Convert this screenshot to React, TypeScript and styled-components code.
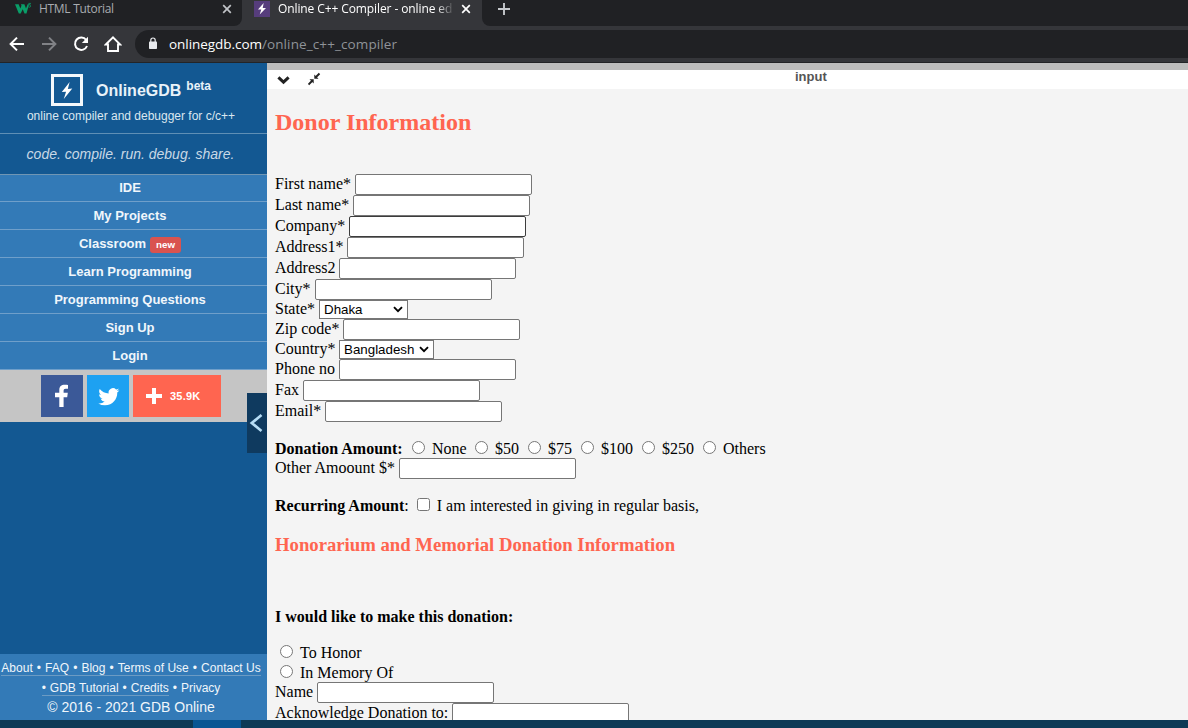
import React from "react";
import styled, { createGlobalStyle } from "styled-components";

const GlobalStyle = createGlobalStyle`
  * { box-sizing: border-box; }
  html, body { margin: 0; padding: 0; overflow: hidden; }
`;

const sans = '"Liberation Sans", Arial, sans-serif';
const serif = '"Liberation Serif", "Times New Roman", serif';
const chromeFont = '"Open Sans", "Noto Sans", sans-serif';

const Window = styled.div`
  width: 1188px;
  height: 728px;
  display: flex;
  flex-direction: column;
  overflow: hidden;
  background: #f4f4f4;
`;

/* ---------- browser chrome ---------- */

const TabStrip = styled.div`
  height: 26px;
  flex: none;
  display: flex;
  background: #35363a;
  font-family: ${chromeFont};
  font-size: 12px;
`;

const Tab = styled.div<{ $active?: boolean; $w: number }>`
  width: ${(p) => p.$w}px;
  height: 26px;
  flex: none;
  display: flex;
  align-items: flex-start;
  padding: 0 ${(p) => (p.$active ? 11 : 10)}px 0 ${(p) => (p.$active ? 12 : 15)}px;
  background: ${(p) => (p.$active ? "#35363a" : "#202124")};
  border-bottom-right-radius: ${(p) => (p.$active ? 0 : 8)}px;
  color: ${(p) => (p.$active ? "#fff" : "#a9acb0")};
  svg { flex: none; }
`;

const TabTitle = styled.span<{ $gap: number; $fade?: boolean; $ls: number }>`
  flex: 1;
  min-width: 0;
  margin-left: ${(p) => p.$gap}px;
  line-height: 18px;
  letter-spacing: ${(p) => p.$ls}px;
  white-space: nowrap;
  overflow: hidden;
  ${(p) => p.$fade && "mask-image: linear-gradient(to right, #000 158px, transparent 177px);"}
`;

const TabRest = styled.div`
  flex: 1;
  padding-left: 16px;
  background: #202124;
  border-bottom-left-radius: 8px;
`;

const Toolbar = styled.div`
  height: 37px;
  flex: none;
  display: flex;
  align-items: center;
  padding: 0 0 1px 8px;
  background: #35363a;
  border-bottom: 1px solid #232427;
`;

const NavIcons = styled.div`
  display: flex;
  gap: 14px;
  width: 127px;
`;

const AddressBar = styled.div`
  flex: 1;
  height: 28px;
  display: flex;
  align-items: center;
  padding-left: 13px;
  background: #202124;
  border-radius: 14px 0 0 14px;
  font-family: ${chromeFont};
  font-size: 13.5px;
  color: #8f9398;
  white-space: pre;
`;

const Url = styled.span`
  margin-left: 11px;
  line-height: 26px;
`;
const Host = styled.span`
  color: #fff;
  letter-spacing: -0.05px;
`;
const Path = styled.span`
  letter-spacing: 0.11px;
`;

/* ---------- sidebar ---------- */

const Body = styled.div`
  height: 657px;
  flex: none;
  display: flex;
`;

const Sidebar = styled.aside`
  position: relative;
  width: 267px;
  flex: none;
  display: flex;
  flex-direction: column;
  background: #135892;
  font-family: ${sans};
  color: #fff;
`;

const Brand = styled.div`
  height: 71px;
  padding-top: 11px;
  border-bottom: 1px solid #5f8fb5;
`;

const BrandRow = styled.div`
  display: flex;
  height: 32px;
  padding-left: 51px;
`;

const Logo = styled.div`
  width: 32px;
  height: 32px;
  display: flex;
  align-items: center;
  justify-content: center;
  border: 3px solid #f4f8fb;
`;

const BrandName = styled.div`
  margin-left: 13px;
  font-size: 16px;
  font-weight: bold;
  line-height: 33px;
  color: #e9f2f9;
`;

const Beta = styled.div`
  margin-left: 5px;
  font-size: 12px;
  font-weight: bold;
  line-height: 24px;
  color: #e9f2f9;
`;

const Tagline = styled.div`
  width: 262px;
  text-align: center;
  font-size: 12px;
  line-height: 20px;
  color: #dbe7f0;
`;

const Slogan = styled.div`
  height: 41px;
  padding-right: 6px;
  text-align: center;
  font-size: 14px;
  font-style: italic;
  line-height: 40px;
  color: #c9d9e6;
  border-bottom: 1px solid #7096b4;
`;

const NavItem = styled.div<{ $h?: number }>`
  height: ${(p) => p.$h ?? 28}px;
  display: flex;
  justify-content: center;
  align-items: center;
  padding: 0 7px ${(p) => (p.$h === 27 ? 1 : 0)}px 0;
  background: #337ab7;
  border-bottom: 1px solid #6f9fca;
  font-size: 13px;
  font-weight: bold;
  color: #f0f6fb;
`;

const NewBadge = styled.span`
  height: 16px;
  margin: 3px 0 0 4px;
  padding: 0 6px;
  border-radius: 3px;
  background: #d9534f;
  color: #fff;
  font-size: 9.75px;
  line-height: 16px;
`;

const Social = styled.div`
  height: 52px;
  display: flex;
  gap: 4px;
  padding: 5px 0 0 41px;
  background: #c5c5c5;
`;

const SocialButton = styled.div<{ $bg: string; $w?: number }>`
  width: ${(p) => p.$w ?? 42}px;
  height: 42px;
  background: ${(p) => p.$bg};
  display: flex;
  align-items: center;
  font-size: 11px;
  font-weight: bold;
`;

const Count = styled.span`
  margin-left: 8px;
  letter-spacing: 0.2px;
`;

const Collapse = styled.div`
  position: absolute;
  top: 330px;
  right: 0;
  width: 20px;
  height: 60px;
  display: flex;
  align-items: center;
  background: #0f3a5f;
`;

const Footer = styled.div`
  margin-top: auto;
  height: 66px;
  padding: 4px 5px 0 0;
  background: #337ab7;
  text-align: center;
  display: flex;
  flex-direction: column;
  align-items: center;
  color: #f0f6fb;
`;

const FooterLinks = styled.div<{ $ls: number }>`
  display: flex;
  height: 20px;
  gap: 4px;
  font-size: 12px;
  line-height: 20px;
  letter-spacing: ${(p) => p.$ls}px;
  white-space: pre;
`;

const Underlined = styled.div`
  display: flex;
  gap: 4px;
  height: 18px;
  border-bottom: 1px solid #6c9bc3;
`;

const Copyright = styled.div`
  font-size: 14px;
  line-height: 18px;
`;

/* ---------- main ---------- */

const Main = styled.main`
  flex: 1;
  min-width: 0;
  overflow: hidden;
  background: #f4f4f4;
  color: #000;
  font-family: ${serif};
  font-size: 16px;
`;

const PaneBar = styled.div`
  height: 26px;
  display: flex;
  padding-left: 10px;
  background: #fff;
  border-top: 7px solid #bdbdbd;
`;

const PaneIcons = styled.div`
  width: 518px;
  display: flex;
  align-items: flex-start;
  gap: 18px;
`;

const PaneTitle = styled.div`
  font-family: ${sans};
  font-weight: bold;
  font-size: 13px;
  line-height: 14px;
  color: #555;
`;

const Form = styled.form`
  padding-left: 8px;
  white-space: pre;
`;

const Heading = styled.h2`
  margin: 19px 0 38px;
  height: 28px;
  font-size: 24px;
  line-height: 28px;
  color: #ff6550;
`;

const SubHeading = styled.h3`
  margin: 18px 0 52px;
  height: 22px;
  font-size: 18.72px;
  line-height: 22px;
  color: #ff6550;
`;

const Question = styled.h4`
  margin: 0 0 16px;
  height: 19px;
  font-size: 16px;
  line-height: 18px;
`;

const Row = styled.div<{ $h?: number }>`
  display: flex;
  height: ${(p) => p.$h ?? 21}px;
`;

const Label = styled.label<{ $w: number; $select?: boolean }>`
  width: ${(p) => p.$w}px;
  flex: none;
  line-height: ${(p) => (p.$select ? 18 : 20)}px;
`;

const TextInput = styled.input<{ $dark?: boolean }>`
  width: 177px;
  height: 21px;
  margin: 0;
  padding: 1px 2px;
  border: 1px solid ${(p) => (p.$dark ? "#3c3c3c" : "#767676")};
  border-radius: 2px;
  background: #fff;
`;

const SelectBox = styled.div<{ $w: number }>`
  width: ${(p) => p.$w}px;
  height: 19px;
  display: flex;
  justify-content: space-between;
  align-items: center;
  padding: 0 4px;
  border: 1px solid #767676;
  background: #fff;
  font-family: ${sans};
  font-size: 13.33px;
  line-height: 17px;
`;

const Options = styled.div`
  display: flex;
  height: 19px;
  margin-top: 17px;
  line-height: 19px;
`;

const Bold = styled.b<{ $w: number }>`
  width: ${(p) => p.$w}px;
`;

const Option = styled.label<{ $w: number }>`
  width: ${(p) => p.$w}px;
  display: flex;
  white-space: pre;
`;

const Control = styled.input`
  width: 13px;
  height: 13px;
  margin: 2px 7px 0 0;
  flex: none;
`;

const Recurring = styled.div`
  display: flex;
  height: 20px;
  gap: 8px;
  margin-top: 17px;
  line-height: 20px;
`;

const Stacked = styled.div<{ $h: number }>`
  display: flex;
  height: ${(p) => p.$h}px;
  padding-left: 5px;
  line-height: 20px;
`;

const Taskbar = styled.div`
  height: 8px;
  flex: none;
  padding-left: 193px;
  background: #0d3a56;
`;
const TaskActive = styled.div`
  width: 48px;
  height: 8px;
  background: #085693;
`;

const Bolt = ({ w, h }: { w: number; h: number }) => (
  <svg width={w} height={h} viewBox="0 0 12 18">
    <path d="M8.800 0 0.500 10.600 5 10.200 2.600 18 11.600 6.800 6.900 7.300Z" fill="#fff" />
  </svg>
);

const CloseIcon = ({ color }: { color: string }) => (
  <svg width="10" height="18" viewBox="0 0 10 18">
    <path d="M1.2 5.2l7.6 7.6M8.800 5.2l-7.6 7.6" stroke={color} strokeWidth="1.7" fill="none" />
  </svg>
);

const SelectArrow = () => (
  <svg width="10" height="7" viewBox="0 0 10 7">
    <path d="M1 1.2l4 4 4-4" stroke="#000" strokeWidth="1.9" fill="none" />
  </svg>
);

type Field = { label: string; w: number; select?: string; selectW?: number; dark?: boolean };

const fields: Field[] = [
  { label: "First name*", w: 80 },
  { label: "Last name*", w: 78 },
  { label: "Company*", w: 74, dark: true },
  { label: "Address1*", w: 72 },
  { label: "Address2", w: 64 },
  { label: "City*", w: 40 },
  { label: "State*", w: 44, select: "Dhaka", selectW: 89 },
  { label: "Zip code*", w: 68 },
  { label: "Country*", w: 64, select: "Bangladesh", selectW: 95 },
  { label: "Phone no", w: 64 },
  { label: "Fax", w: 28 },
  { label: "Email*", w: 50 },
];

const amounts = [
  { label: "None", w: 63 },
  { label: "$50", w: 53 },
  { label: "$75", w: 53 },
  { label: "$100", w: 61 },
  { label: "$250", w: 61 },
  { label: "Others", w: 70 },
];

const navItems = ["IDE", "My Projects", "Classroom", "Learn Programming", "Programming Questions", "Sign Up", "Login"];

export default function App() {
  return (
    <Window>
      <GlobalStyle />
      <TabStrip>
        <Tab $w={242}>
          <svg width="17" height="16" viewBox="0 0 17 16">
            <path d="M0 4.300h3.700l1.600 4.200 1.200-2.800-.6-1.400h3.500l1.600 4.200 1.600-4.200h1.500L11.500 13.500H9.500L7.700 9.200 5.700 13.500H3.800Z" fill="#0a9d68" />
            <path d="M13.400 3.400h2.200L14.400 5c1.600 0 1.600 2.200 0 2.200l-1.100-.4" stroke="#0a9d68" strokeWidth="0.8" fill="none" />
          </svg>
          <TabTitle $gap={7} $ls={-0.3}>HTML Tutorial</TabTitle>
          <CloseIcon color="#c0c3c7" />
        </Tab>
        <Tab $w={240} $active>
          <svg width="16" height="17" viewBox="0 0 16 17">
            <rect y="1" width="16" height="16" fill="#563d7c" />
            <path d="M9.700 3 4 9.400h3.300L5.700 14.500 12 8H8.700Z" fill="#fff" />
          </svg>
          <TabTitle $gap={8} $ls={-0.1} $fade>Online C++ Compiler - online ed</TabTitle>
          <CloseIcon color="#fff" />
        </Tab>
        <TabRest>
          <svg width="12" height="18" viewBox="0 0 12 18">
            <path d="M6 3v12M0 9h12" stroke="#c5c8cc" strokeWidth="1.9" fill="none" />
          </svg>
        </TabRest>
      </TabStrip>
      <Toolbar>
        <NavIcons>
          <svg width="18" height="18" viewBox="0 0 18 18">
            <path d="M16 9H3M9 2.600 2.600 9 9 15.400" stroke="#fff" strokeWidth="2" fill="none" />
          </svg>
          <svg width="18" height="18" viewBox="0 0 18 18">
            <path d="M2 9h13M9 2.600 15.400 9 9 15.400" stroke="#818286" strokeWidth="2" fill="none" />
          </svg>
          <svg width="18" height="18" viewBox="0 0 18 18">
            <path d="M14.200 5A6.200 6.200 0 1 0 15 11" stroke="#fff" strokeWidth="2" fill="none" />
            <path d="M16 1.800V8H9.800Z" fill="#fff" />
          </svg>
          <svg width="18" height="18" viewBox="0 0 18 18">
            <path d="M1.800 9.500 9 2.300l7.200 7.200H14V16H4V9.500Z" stroke="#fff" strokeWidth="1.900" fill="none" />
          </svg>
        </NavIcons>
        <AddressBar>
          <svg width="10" height="13" viewBox="0 0 10 13">
            <rect x="1" y="4.500" width="8" height="7.500" rx="0.800" fill="#e8eaed" />
            <path d="M2.800 5V3.200a2.200 2.200 0 0 1 4.400 0V5" stroke="#e8eaed" strokeWidth="1.200" fill="none" />
          </svg>
          <Url>
            <Host>onlinegdb.com</Host>
            <Path>/online_c++_compiler</Path>
          </Url>
        </AddressBar>
      </Toolbar>
      <Body>
        <Sidebar>
          <Brand>
            <BrandRow>
              <Logo><Bolt w={12} h={17} /></Logo>
              <BrandName>OnlineGDB</BrandName>
              <Beta>beta</Beta>
            </BrandRow>
            <Tagline>online compiler and debugger for c/c++</Tagline>
          </Brand>
          <Slogan>code. compile. run. debug. share.</Slogan>
          {navItems.map((item, i) => (
            <NavItem key={item} $h={i === 0 ? 27 : 28}>
              {item}
              {item === "Classroom" && <NewBadge>new</NewBadge>}
            </NavItem>
          ))}
          <Social>
            <SocialButton $bg="#3b5998">
              <svg width="42" height="42" viewBox="0 0 42 42">
                <path d="M18.300 32V22.300H14v-4.500h4.300v-2.600c0-3.700 2-5.400 5.400-5.400 1.400 0 2.500.1 3.300.2v3.800h-2.200c-1.700 0-2.200.8-2.200 2v2h4.200l-.6 4.500h-3.600V32Z" fill="#fff" />
              </svg>
            </SocialButton>
            <SocialButton $bg="#1da1f2">
              <svg width="42" height="42" viewBox="0 0 42 42">
                <path transform="translate(11.300 11.200) scale(0.880)" d="M23.950 4.570a10 10 0 0 1-2.820.77 4.960 4.960 0 0 0 2.160-2.720c-.95.55-2 .95-3.120 1.190a4.920 4.920 0 0 0-8.380 4.480C7.690 8.090 4.070 6.130 1.640 3.160a4.820 4.820 0 0 0-.67 2.470c0 1.710.87 3.210 2.190 4.100a4.900 4.900 0 0 1-2.230-.62v.06a4.920 4.920 0 0 0 3.950 4.830 5 5 0 0 1-2.210.08 4.940 4.940 0 0 0 4.600 3.420A9.870 9.870 0 0 1 0 19.540a14 14 0 0 0 7.550 2.210c9.050 0 14-7.500 14-13.980 0-.21 0-.42-.02-.63a9.940 9.940 0 0 0 2.460-2.550Z" fill="#fff" />
              </svg>
            </SocialButton>
            <SocialButton $bg="#ff6550" $w={88}>
              <svg width="29" height="42" viewBox="0 0 29 42">
                <path d="M21 13v16M13 21h16" stroke="#fff" strokeWidth="4" />
              </svg>
              <Count>35.9K</Count>
            </SocialButton>
          </Social>
          <Collapse>
            <svg width="20" height="20" viewBox="0 0 20 20">
              <path d="M14.500 2 4.800 10 14.500 18" stroke="#b5dcf5" strokeWidth="2.700" fill="none" />
            </svg>
          </Collapse>
          <Footer>
            <FooterLinks $ls={0.03}>
              <Underlined>
                <span>About</span><span>•</span><span>FAQ</span><span>•</span><span>Blog</span><span>•</span>
                <span>Terms of Use</span><span>•</span><span>Contact Us</span>
              </Underlined>
            </FooterLinks>
            <FooterLinks $ls={0}>
              <Underlined>
                <span>•</span><span>GDB Tutorial</span><span>•</span><span>Credits</span>
              </Underlined>
              <span>•</span><span>Privacy</span>
            </FooterLinks>
            <Copyright>© 2016 - 2021 GDB Online</Copyright>
          </Footer>
        </Sidebar>
        <Main>
          <PaneBar>
            <PaneIcons>
              <svg width="13" height="19" viewBox="0 0 13 19">
                <path d="M1.400 7.300l5.100 4.800 5.100-4.800" stroke="#222" strokeWidth="3" fill="none" />
              </svg>
              <svg width="13" height="19" viewBox="0 0 13 19">
                <path d="M11.500 3.500 8 7M0.500 14.500 4 11" stroke="#222" strokeWidth="1.900" />
                <path d="M6.300 4.500v4.200h4.200ZM5.700 13.500V9.300H1.500Z" fill="#222" />
              </svg>
            </PaneIcons>
            <PaneTitle>input</PaneTitle>
          </PaneBar>
          <Form>
            <Heading>Donor Information</Heading>
            {fields.map((f) => (
              <Row key={f.label} $h={f.select ? 19 : 21}>
                <Label $w={f.w} $select={!!f.select}>{f.label}</Label>
                {f.select ? (
                  <SelectBox $w={f.selectW!}>
                    {f.select}
                    <SelectArrow />
                  </SelectBox>
                ) : (
                  <TextInput $dark={f.dark} />
                )}
              </Row>
            ))}
            <Options>
              <Bold $w={137}>Donation Amount:</Bold>
              {amounts.map((a) => (
                <Option key={a.label} $w={a.w}>
                  <Control type="radio" name="amount" />
                  {a.label}
                </Option>
              ))}
            </Options>
            <Row>
              <Label $w={124}>Other Amoount $*</Label>
              <TextInput />
            </Row>
            <Recurring>
              <span><b>Recurring Amount</b>:</span>
              <Option $w={300}>
                <Control type="checkbox" />
                I am interested in giving in regular basis,
              </Option>
            </Recurring>
            <SubHeading>Honorarium and Memorial Donation Information</SubHeading>
            <Question>I would like to make this donation:</Question>
            <Stacked $h={20}><Control type="radio" name="kind" />To Honor</Stacked>
            <Stacked $h={19}><Control type="radio" name="kind" />In Memory Of</Stacked>
            <Row>
              <Label $w={42}>Name</Label>
              <TextInput />
            </Row>
            <Row>
              <Label $w={177}>Acknowledge Donation to:</Label>
              <TextInput />
            </Row>
          </Form>
        </Main>
      </Body>
      <Taskbar><TaskActive /></Taskbar>
    </Window>
  );
}
